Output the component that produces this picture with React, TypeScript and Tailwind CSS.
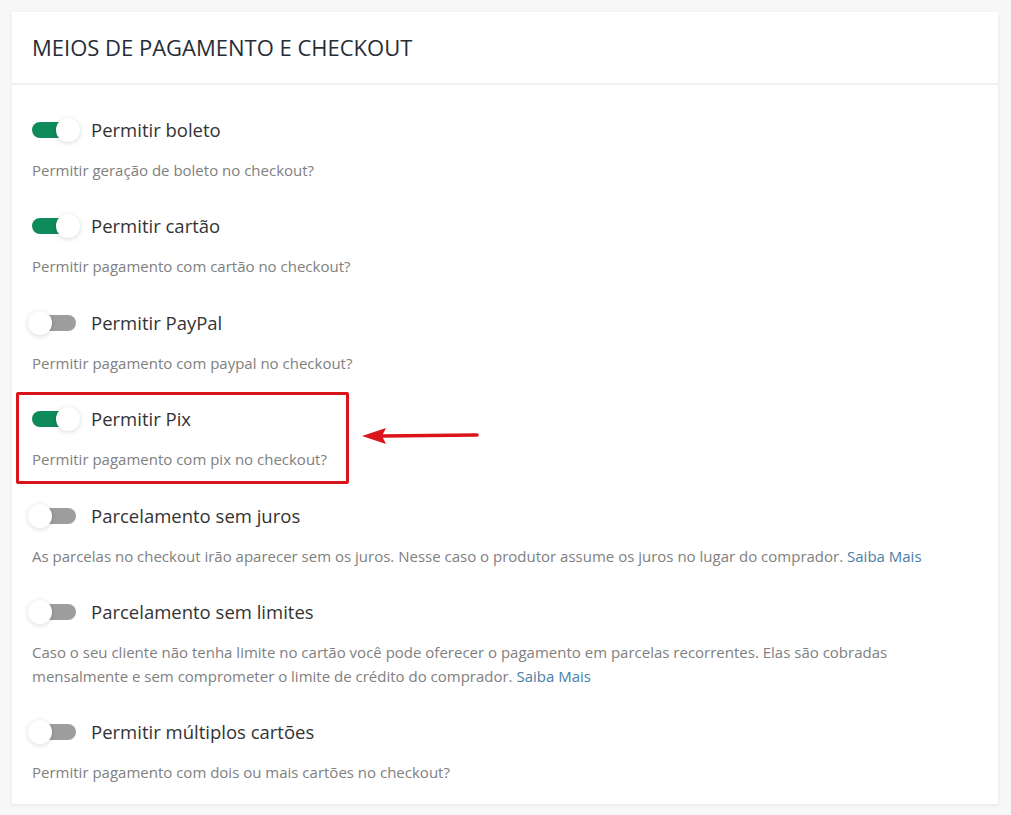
import React from 'react';

type Option = {
  label: string;
  enabled: boolean;
  description: React.ReactNode;
  highlight?: boolean;
};

const SaibaMais = () => (
  <a href="#" className="text-[#4a7ea6]">
    Saiba Mais
  </a>
);

const options: Option[] = [
  { label: 'Permitir boleto', enabled: true, description: 'Permitir geração de boleto no checkout?' },
  { label: 'Permitir cartão', enabled: true, description: 'Permitir pagamento com cartão no checkout?' },
  { label: 'Permitir PayPal', enabled: false, description: 'Permitir pagamento com paypal no checkout?' },
  { label: 'Permitir Pix', enabled: true, description: 'Permitir pagamento com pix no checkout?', highlight: true },
  {
    label: 'Parcelamento sem juros',
    enabled: false,
    description: (
      <>
        As parcelas no checkout irão aparecer sem os juros. Nesse caso o produtor assume os juros no lugar do comprador.{' '}
        <SaibaMais />
      </>
    ),
  },
  {
    label: 'Parcelamento sem limites',
    enabled: false,
    description: (
      <>
        Caso o seu cliente não tenha limite no cartão você pode oferecer o pagamento em parcelas recorrentes. Elas são
        cobradas mensalmente e sem comprometer o limite de crédito do comprador. <SaibaMais />
      </>
    ),
  },
  { label: 'Permitir múltiplos cartões', enabled: false, description: 'Permitir pagamento com dois ou mais cartões no checkout?' },
];

const Toggle: React.FC<{ on: boolean }> = ({ on }) => (
  <div className="relative h-6 w-[44px] flex items-center">
    <div className={`h-4 w-[44px] rounded-full ${on ? 'bg-[#0f8a5b]' : 'bg-[#9e9e9e]'}`} />
    <div
      className={`absolute top-0 h-6 w-6 rounded-full bg-white shadow-[0_1px_5px_rgba(0,0,0,0.16)] ${
        on ? 'left-[24px]' : 'left-[-4px]'
      }`}
    />
  </div>
);

const Arrow = () => (
  <svg width="120" height="18" viewBox="0 0 120 18" className="absolute left-[330px] top-[20px]">
    <line x1="20" y1="9" x2="115" y2="8" stroke="#d9141b" strokeWidth="3.5" strokeLinecap="round" />
    <polygon points="0,9 24,1 20,9 24,17" fill="#d9141b" />
  </svg>
);

export default function App() {
  return (
    <div className="min-h-screen bg-[#f7f7f7] p-3" style={{ fontFamily: '"Open Sans", sans-serif' }}>
      <div className="w-[986px] bg-white shadow-[0_1px_3px_rgba(0,0,0,0.08)]">
        <div className="h-[73px] flex items-center px-5 border-b-2 border-[#f0f0f0]">
          <h1 className="text-[22px] text-[#262d37] uppercase">Meios de pagamento e checkout</h1>
        </div>
        <div className="pl-5 pr-6 pt-[33px] pb-5 flex flex-col gap-[32.4px]">
          {options.map((opt) => (
            <div key={opt.label} className="relative">
              {opt.highlight && (
                <>
                  <div className="absolute left-[-16px] top-[-15px] w-[333px] h-[92px] border-[3px] border-[#d9141b] rounded-[2px]" />
                  <Arrow />
                </>
              )}
              <div className="flex items-center h-6">
                <Toggle on={opt.enabled} />
                <span className="ml-[15px] text-[18.5px] text-[#333] leading-6">{opt.label}</span>
              </div>
              <p className="mt-4 text-[15px] leading-6 text-[#808080]">{opt.description}</p>
            </div>
          ))}
        </div>
      </div>
    </div>
  );
}
